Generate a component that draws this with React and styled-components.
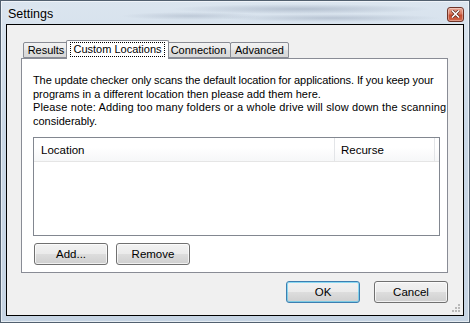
import React from "react"
import styled, { createGlobalStyle } from "styled-components"

const Global = createGlobalStyle`
  html, body { margin: 0; padding: 0; }
  body {
    width: 470px;
    height: 323px;
    overflow: hidden;
    font-family: "Liberation Sans", Arial, sans-serif;
    font-size: 11px;
    color: #000;
  }
`

const Window = styled.div`
  box-sizing: border-box;
  width: 470px;
  height: 323px;
  display: flex;
  flex-direction: column;
  border: 1px solid #52606f;
  background:
    radial-gradient(ellipse 130px 5px at 300px 8px, rgba(110, 125, 150, 0.35), transparent),
    radial-gradient(ellipse 110px 4px at 330px 17px, rgba(110, 125, 150, 0.3), transparent),
    radial-gradient(ellipse 70px 4px at 190px 15px, rgba(110, 125, 150, 0.25), transparent),
    linear-gradient(180deg, #dbe5ef 0%, #cad8e6 40%, #c6d4e3 100%);
  box-shadow: inset 0 0 0 1px rgba(255, 255, 255, 0.55);
`

const TitleBar = styled.div`
  height: 23px;
  display: flex;
  align-items: center;
  justify-content: space-between;
  padding: 3px 5px 0 7px;
  box-sizing: border-box;
`

const Title = styled.span`
  font-size: 12.5px;
  color: #000;
  text-shadow: 0 0 6px rgba(255, 255, 255, 0.9);
`

const CloseButton = styled.div`
  box-sizing: border-box;
  width: 17px;
  height: 15px;
  border: 1px solid #6e3428;
  border-radius: 3px;
  background: linear-gradient(180deg, #e9a896 0%, #d6765d 45%, #c24a2f 55%, #d0664a 100%);
  box-shadow: inset 0 0 0 1px rgba(255, 255, 255, 0.35);
  display: flex;
  align-items: center;
  justify-content: center;
`

const Client = styled.div`
  position: relative;
  box-sizing: border-box;
  flex: 1;
  margin: 0 5px 6px 5px;
  border: 1px solid #000;
  background: #f0f0f0;
  display: flex;
  flex-direction: column;
  padding: 15px 15px 0 14px;
`

const TabControl = styled.div`
  display: flex;
  flex-direction: column;
`

const TabStrip = styled.div`
  display: flex;
  align-items: flex-end;
  height: 18px;
  padding-left: 2px;
`

const Tab = styled.div`
  box-sizing: border-box;
  position: relative;
  width: ${p => (p.$active ? p.$w + 4 : p.$w)}px;
  height: ${p => (p.$active ? 19 : 16)}px;
  margin-left: ${p => (p.$active ? -3 : p.$first ? 0 : -1)}px;
  margin-right: ${p => (p.$active ? -2 : 0)}px;
  margin-bottom: ${p => (p.$active ? -1 : 0)}px;
  z-index: ${p => (p.$active ? 1 : 0)};
  border: 1px solid #898c95;
  border-bottom: ${p => (p.$active ? "none" : "1px solid #898c95")};
  border-radius: 2px 2px 0 0;
  background: ${p => (p.$active ? "#fff" : "linear-gradient(180deg, #f2f2f2 0%, #ebebeb 45%, #dddddd 55%, #d8d8d8 100%)")};
  display: flex;
  justify-content: center;
  align-items: ${p => (p.$active ? "flex-start" : "center")};
  padding-top: ${p => (p.$active ? 1 : 0)}px;
  font-size: 11px;
  white-space: nowrap;
`

const FocusLabel = styled.span`
  border: 1px dotted #000;
  padding: 0 2px;
  line-height: 13px;
`

const Panel = styled.div`
  box-sizing: border-box;
  height: 215px;
  border: 1px solid #898c95;
  background: #fff;
  padding: 15px 8px 0 11px;
  display: flex;
  flex-direction: column;
`

const Intro = styled.p`
  margin: 0;
  line-height: 13.5px;
  font-size: 11px;
  white-space: nowrap;
`

const IntroLine = styled.span`
  display: block;
  letter-spacing: ${p => p.$ls || 0}px;
`

const ListView = styled.div`
  box-sizing: border-box;
  margin-top: 9px;
  width: 407px;
  height: 99px;
  border: 1px solid #828790;
  background: #fff;
`

const Header = styled.div`
  display: flex;
  height: 23px;
  border-bottom: 1px solid #e5e5e5;
  background: linear-gradient(180deg, #ffffff 0%, #ffffff 40%, #f6f7f8 100%);
`

const Column = styled.div`
  box-sizing: border-box;
  width: ${p => p.$w}px;
  display: flex;
  align-items: center;
  padding-left: ${p => p.$pad}px;
  border-right: 1px solid #e3e5e8;
  font-size: 11.5px;
`

const ButtonRow = styled.div`
  display: flex;
  gap: 8px;
  margin-top: 7px;
  padding-left: 1px;
`

const Button = styled.div`
  box-sizing: border-box;
  width: 74px;
  height: 22px;
  border: 1px solid ${p => (p.$default ? "#3c7fb1" : "#707070")};
  border-radius: 3px;
  background: linear-gradient(180deg, #f2f2f2 0%, #ebebeb 48%, #dddddd 52%, #cfcfcf 100%);
  box-shadow: inset 0 0 0 1px ${p => (p.$default ? "rgba(72, 200, 241, 0.6)" : "rgba(255, 255, 255, 0.7)")};
  display: flex;
  align-items: center;
  justify-content: center;
  font-size: 11.5px;
`

const Footer = styled.div`
  display: flex;
  justify-content: flex-end;
  gap: 14px;
  padding-top: 8px;
`

const Grip = styled.svg`
  position: absolute;
  right: 3px;
  bottom: 3px;
`

const tabs = [
  { label: "Results", w: 46 },
  { label: "Custom Locations", w: 99, active: true },
  { label: "Connection", w: 65 },
  { label: "Advanced", w: 59 },
]

export default function App() {
  return (
    <>
      <Global />
      <Window>
        <TitleBar>
          <Title>Settings</Title>
          <CloseButton>
            <svg width="9" height="8" viewBox="0 0 9 8">
              <path d="M1 0.5 L8 7.5 M8 0.5 L1 7.5" stroke="#5a2218" strokeWidth="3" />
              <path d="M1 0.5 L8 7.5 M8 0.5 L1 7.5" stroke="#fff" strokeWidth="1.6" />
            </svg>
          </CloseButton>
        </TitleBar>
        <Client>
          <TabControl>
            <TabStrip>
              {tabs.map((t, i) => (
                <Tab key={t.label} $w={t.w} $active={t.active} $first={i === 0}>
                  {t.active ? <FocusLabel>{t.label}</FocusLabel> : t.label}
                </Tab>
              ))}
            </TabStrip>
            <Panel>
              <Intro>
                <IntroLine $ls={-0.1}>
                  The update checker only scans the default location for applications. If you keep your
                </IntroLine>
                <IntroLine>programs in a different location then please add them here.</IntroLine>
                <IntroLine $ls={0.15}>
                  Please note: Adding too many folders or a whole drive will slow down the scanning
                </IntroLine>
                <IntroLine>considerably.</IntroLine>
              </Intro>
              <ListView>
                <Header>
                  <Column $w={301} $pad={7}>Location</Column>
                  <Column $w={100} $pad={6}>Recurse</Column>
                </Header>
              </ListView>
              <ButtonRow>
                <Button>Add...</Button>
                <Button>Remove</Button>
              </ButtonRow>
            </Panel>
          </TabControl>
          <Footer>
            <Button $default>OK</Button>
            <Button>Cancel</Button>
          </Footer>
          <Grip width="8" height="8" viewBox="0 0 8 8">
            {[[6, 0], [3, 3], [6, 3], [0, 6], [3, 6], [6, 6]].map(([x, y]) => (
              <rect key={`${x}-${y}`} x={x} y={y} width="2" height="2" fill="#b9b9b9" />
            ))}
          </Grip>
        </Client>
      </Window>
    </>
  )
}
